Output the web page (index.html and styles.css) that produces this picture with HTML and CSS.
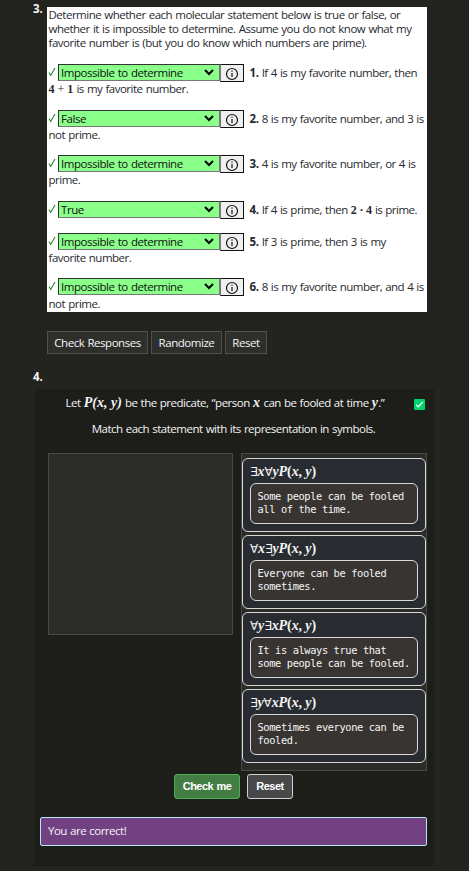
FILE: index.html
```
<!DOCTYPE html>
<html lang="en">
<head>
<meta charset="utf-8">
<title>Exercises</title>
<link rel="stylesheet" href="styles.css">
</head>
<body>
<svg class="defs" width="0" height="0"><defs>
<symbol id="chev" viewBox="0 0 10 7"><path d="M1 1l4 4 4-4" fill="none" stroke="#000" stroke-width="2"/></symbol>
<symbol id="info" viewBox="0 0 14 14"><circle cx="7" cy="7" r="5.5" fill="none" stroke="#111" stroke-width="1.2"/><path d="M7 6v4M7 3.6v1.2" stroke="#111" stroke-width="1.2"/></symbol>
<symbol id="tick" viewBox="0 0 8 10"><path d="M1 5.5l1.7 3L7 1" fill="none" stroke="#268426" stroke-width="1.1"/></symbol>
</defs></svg>
<main>
<section class="exercise first">
<b class="num">3.</b>
<div class="webwork">
<p class="intro">Determine whether each molecular statement below is true or false, or<br>whether it is impossible to determine. Assume you do not know what my<br>favorite number is (but you do know which numbers are prime).</p>
<div class="item h46"><div class="row"><svg class="tick"><use href="#tick"/></svg><div class="select">Impossible to determine<svg><use href="#chev"/></svg></div><div class="info"><svg><use href="#info"/></svg></div><span class="q"><b>1.</b> If 4 is my favorite number, then</span></div><p><span class="m">4 <i>+</i> 1</span> is my favorite number.</p></div>
<div class="item h45"><div class="row"><svg class="tick"><use href="#tick"/></svg><div class="select">False<svg><use href="#chev"/></svg></div><div class="info"><svg><use href="#info"/></svg></div><span class="q"><b>2.</b> 8 is my favorite number, and 3 is</span></div><p>not prime.</p></div>
<div class="item h46"><div class="row"><svg class="tick"><use href="#tick"/></svg><div class="select">Impossible to determine<svg><use href="#chev"/></svg></div><div class="info"><svg><use href="#info"/></svg></div><span class="q"><b>3.</b> 4 is my favorite number, or 4 is</span></div><p>prime.</p></div>
<div class="item h32"><div class="row"><svg class="tick"><use href="#tick"/></svg><div class="select">True<svg><use href="#chev"/></svg></div><div class="info"><svg><use href="#info"/></svg></div><span class="q"><b>4.</b> If 4 is prime, then <span class="m">2 · 4</span> is prime.</span></div></div>
<div class="item h45"><div class="row"><svg class="tick"><use href="#tick"/></svg><div class="select">Impossible to determine<svg><use href="#chev"/></svg></div><div class="info"><svg><use href="#info"/></svg></div><span class="q"><b>5.</b> If 3 is prime, then 3 is my</span></div><p>favorite number.</p></div>
<div class="item last"><div class="row"><svg class="tick"><use href="#tick"/></svg><div class="select">Impossible to determine<svg><use href="#chev"/></svg></div><div class="info"><svg><use href="#info"/></svg></div><span class="q"><b>6.</b> 8 is my favorite number, and 4 is</span></div><p>not prime.</p></div>
</div>
</section>
<div class="actions"><div class="w101">Check Responses</div><div class="w71">Randomize</div><div class="w42">Reset</div></div>
<b class="num four">4.</b>
<section class="match">
<div class="statement"><p class="s1">Let <span class="pm">P(x, y)</span> be the predicate, “person <span class="pm sm">x</span> can be fooled at time <span class="pm sm">y</span>.”</p><p class="s2">Match each statement with its representation in symbols.</p>
<svg class="badge" viewBox="0 0 11 11"><rect width="11" height="11" rx="1" fill="#00d26a"/><path d="M2.2 5.7l2.1 2.2 4.5-5" fill="none" stroke="#fff" stroke-width="1.3"/></svg></div>
<div class="board">
<div class="pool"></div>
<div class="targets">
<div class="card"><div class="pm"><u>∃</u>x<u>∀</u>yP<s>(</s>x<s>,</s> y<s>)</s></div><div class="answer">Some people can be fooled<br>all of the time.</div></div>
<div class="card"><div class="pm"><u>∀</u>x<u>∃</u>yP<s>(</s>x<s>,</s> y<s>)</s></div><div class="answer">Everyone can be fooled<br>sometimes.</div></div>
<div class="card"><div class="pm"><u>∀</u>y<u>∃</u>xP<s>(</s>x<s>,</s> y<s>)</s></div><div class="answer">It is always true that<br>some people can be fooled.</div></div>
<div class="card"><div class="pm"><u>∃</u>y<u>∀</u>xP<s>(</s>x<s>,</s> y<s>)</s></div><div class="answer">Sometimes everyone can be<br>fooled.</div></div>
</div>
</div>
<div class="controls"><div class="check">Check me</div><div class="reset">Reset</div></div>
<div class="feedback">You are correct!</div>
</section>
</main>
</body>
</html>
```
FILE: styles.css
```
* { box-sizing: border-box; }
body { margin: 0; background: #23241f; color: #f4f4f4; font: 11.5px/14px "Open Sans", sans-serif; letter-spacing: -.49px; word-spacing: .6px; width: 469px; height: 871px; overflow: hidden; }
p { margin: 0; white-space: nowrap; }
svg { display: block; flex: none; }
.defs { position: absolute; }
.first { display: flex; padding-top: 7px; }
.num { width: 47px; padding-left: 33px; font-size: 11.5px; line-height: 14px; margin-top: -5px; letter-spacing: 0; }
.webwork { width: 380px; height: 305px; background: #fff; color: #282a30; padding: 2px 1px 0; }
.intro { height: 55px; margin-top: -1px; margin-bottom: 1px; padding-left: .5px; }
.h46 { height: 46px; } .h45 { height: 45px; } .h32 { height: 32px; }
.row { display: flex; height: 18px; white-space: nowrap; }
.tick { width: 8px; height: 10px; margin: 3px 2px 0 0; }
.select { flex: none; width: 162px; height: 17px; background: #8aff8a; border: 1px solid #333; border-right-color: #777; border-bottom-color: #777; color: #111; padding-left: 2px; display: flex; justify-content: space-between; line-height: 15px; letter-spacing: -.45px; }
.select svg { width: 10px; height: 7px; margin: 4px 5px 0 0; }
.info { flex: none; width: 24px; height: 18px; border: 1px solid #111; border-left-color: #777; background: #efefef; padding: 2px 4px; }
.info svg { width: 14px; height: 14px; }
.q { margin-left: 5.5px; line-height: 18px; letter-spacing: -.51px; }
.q b { letter-spacing: -.4px; }
.item p { line-height: 14px; padding-left: .5px; }
.last p { padding-top: 1px; }
.m { font: bold 12px/14px "Liberation Serif", serif; letter-spacing: 0; word-spacing: 0; }
.m i { font-style: normal; font-weight: normal; }
.q .m { letter-spacing: -.2px; }
.actions { display: flex; gap: 3px; padding: 19px 0 0 47px; }
.actions div { height: 23px; border: 1px solid #50514d; background: #2e2f2b; text-align: center; line-height: 22px; letter-spacing: -.46px; }
.w101 { width: 101px; } .w71 { width: 71px; } .w42 { width: 42px; }
.four { display: block; margin-top: 16px; height: 19px; }
.match { width: 400px; height: 477px; margin-left: 34px; background: #1d1e1a; }
.statement { height: 64px; position: relative; text-align: center; width: 382px; padding-top: 5px; }
.s1, .s2 { line-height: 17px; }
.s2 { padding-top: 9px; padding-left: 17px; }
.badge { position: absolute; left: 380px; top: 10px; width: 11px; height: 11px; }
.pm { font: italic bold 14px/17px "Liberation Serif", serif; letter-spacing: 0; word-spacing: 0; }
.sm { font-size: 14px; letter-spacing: .4px; }
.pm u { text-decoration: none; font: normal 12px/17px "DejaVu Sans", sans-serif; }
.pm s { text-decoration: none; font-style: normal; }
.card .pm { height: 17px; letter-spacing: -.1px; }
.board { display: flex; gap: 8px; padding-left: 14px; }
.pool { width: 185px; height: 182px; background: #2b2c28; border: 1px solid #494a46; }
.targets { width: 186px; height: 318px; background: #2b2c28; border: 1px solid #494a46; padding-top: 4px; display: flex; flex-direction: column; gap: 3px; }
.card { width: 184px; height: 74px; border: 1px solid #d8d8d8; border-radius: 6px; background: #282c30; padding: 4px 7px 0; }
.answer { width: 168px; height: 41px; margin-top: 3px; border: 1px solid #d8d8d8; border-radius: 6px; background: #383432; padding: 6px 6.5px 0; font: 10.4px/13px "DejaVu Sans Mono", monospace; letter-spacing: -.4px; word-spacing: 0; white-space: nowrap; }
.controls { display: flex; gap: 7px; padding: 3px 0 0 140px; }
.controls div { height: 25px; border: 1px solid #d0d0d0; border-radius: 3px; background: #474849; text-align: center; font: bold 11px/23px "Liberation Sans", sans-serif; letter-spacing: -.5px; color: #fff; }
.controls .check { width: 66px; background: #447d43; border-color: #4caf50; }
.controls .reset { width: 46px; }
.feedback { width: 387px; height: 29px; margin: 18px 0 0 6px; background: #714181; border: 1px solid #b8e5f5; border-radius: 2px; padding-left: 7px; line-height: 26px; }
```
